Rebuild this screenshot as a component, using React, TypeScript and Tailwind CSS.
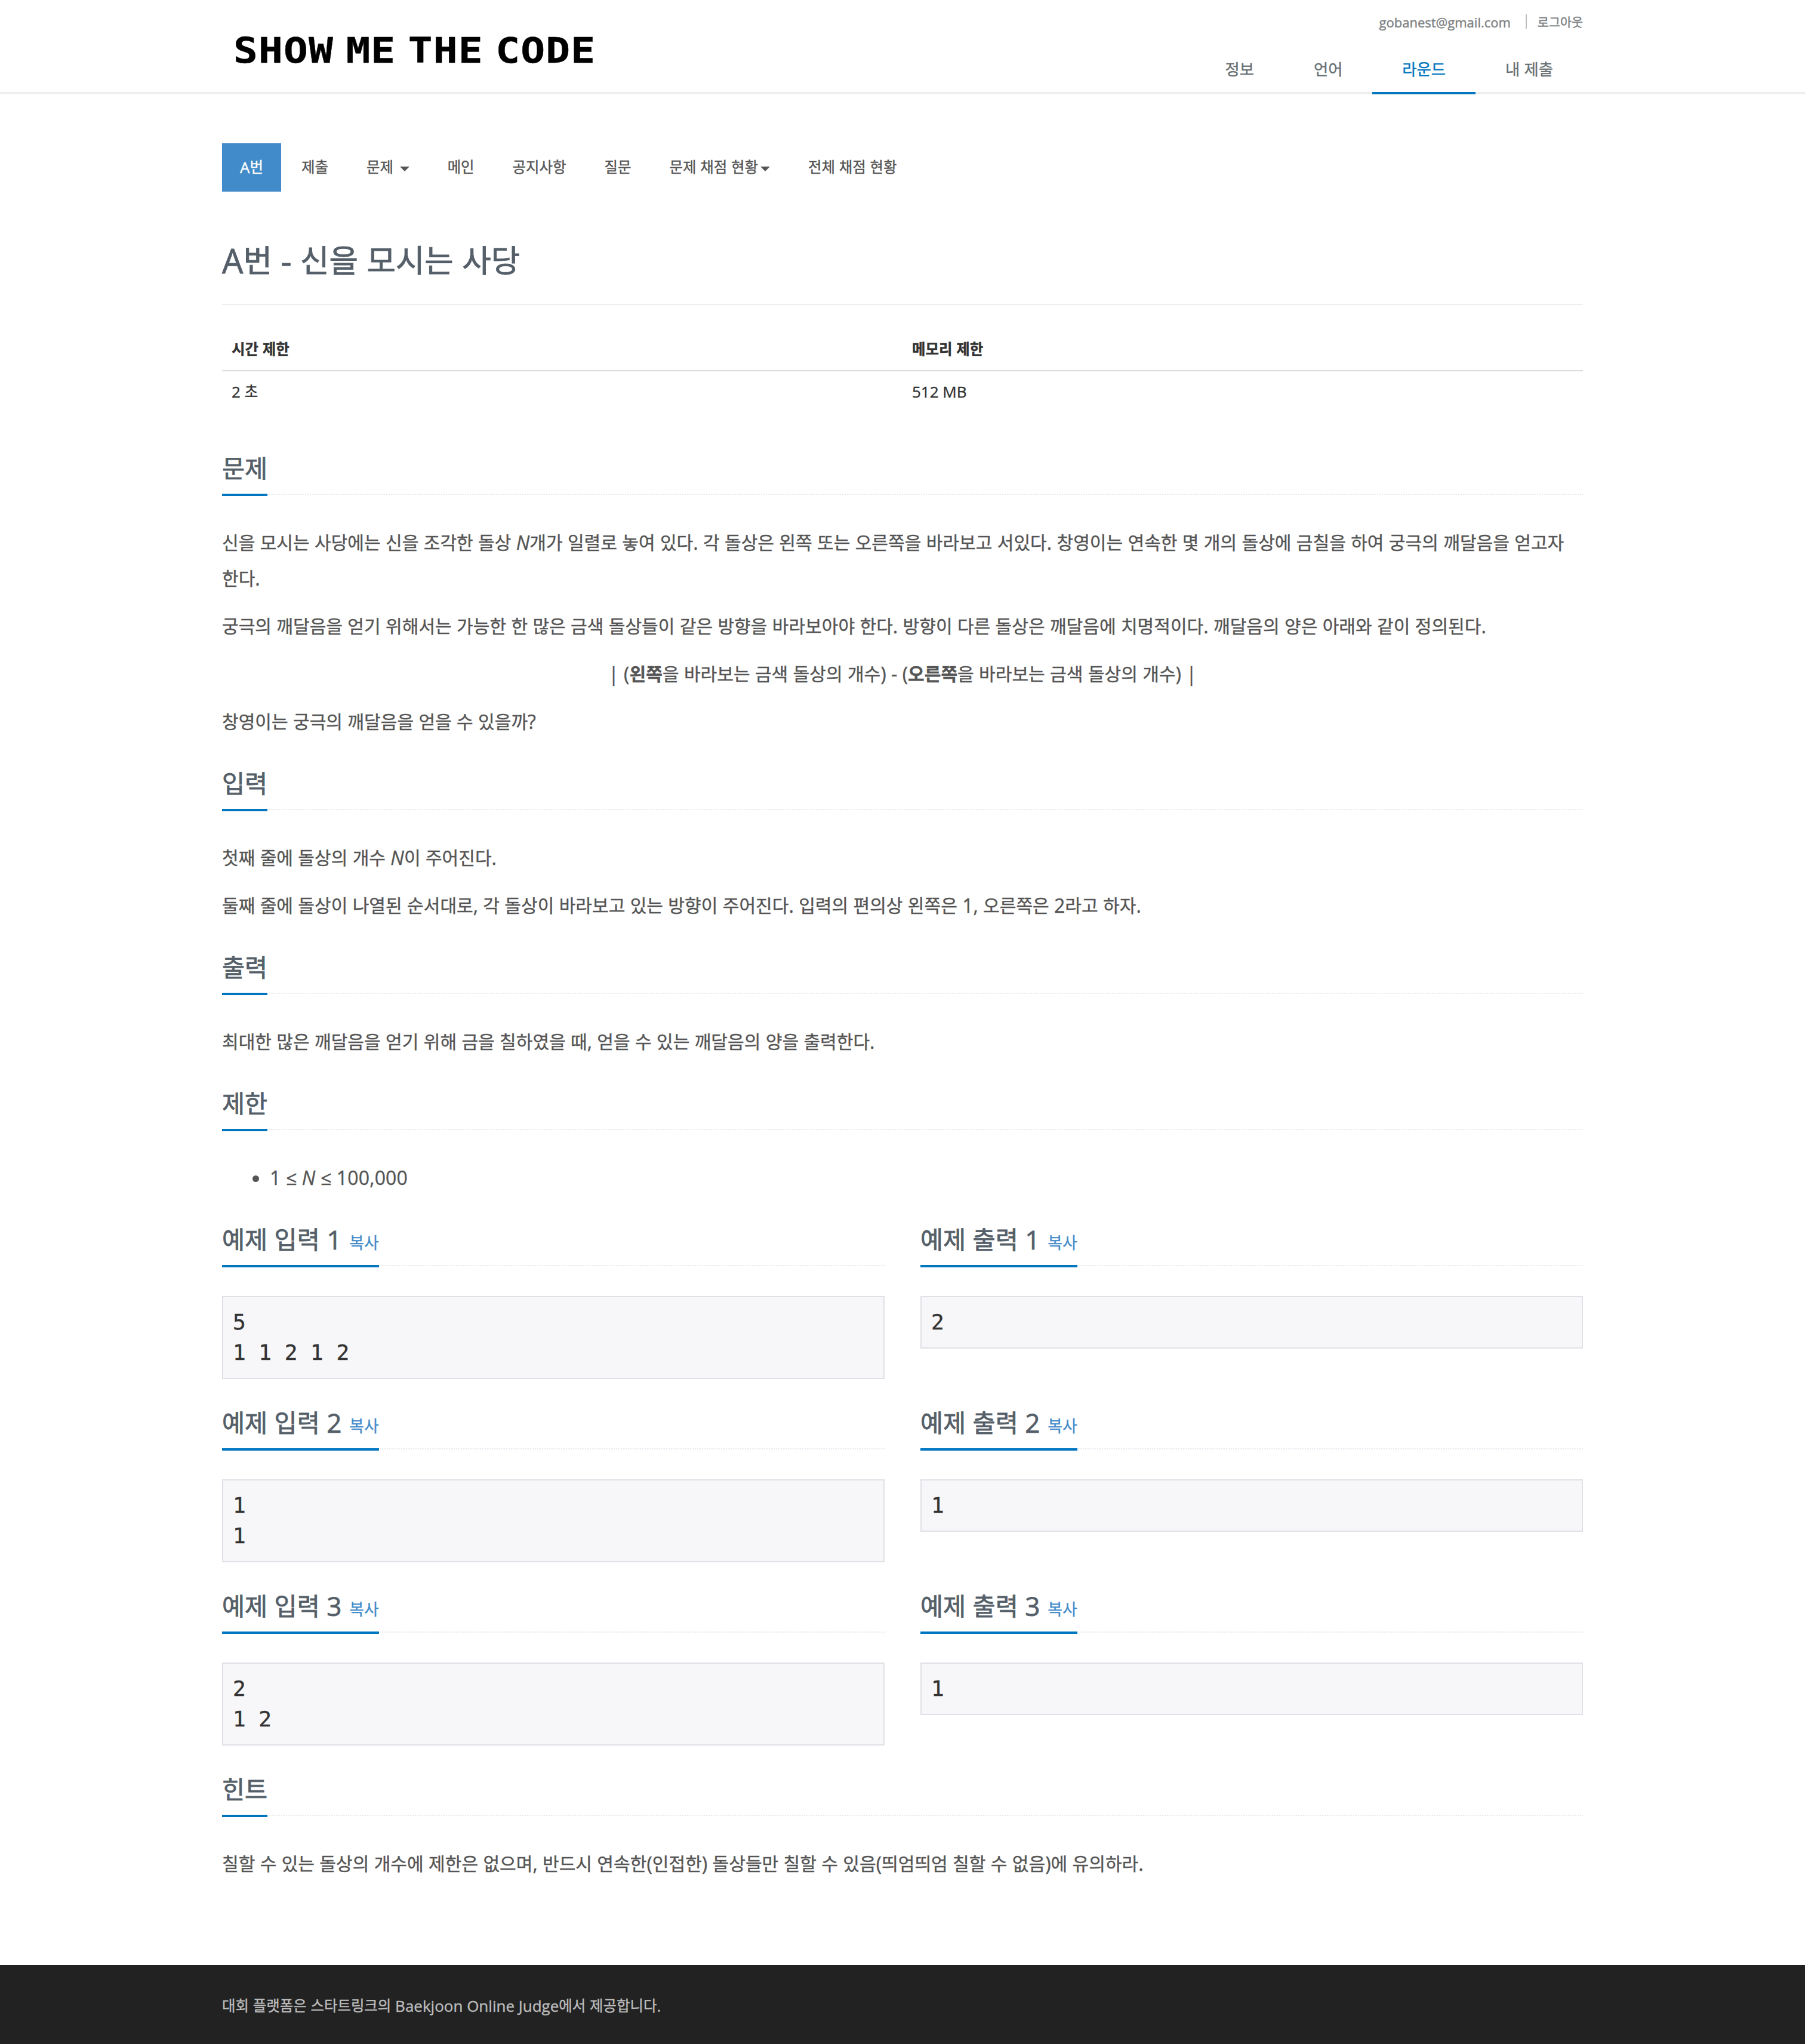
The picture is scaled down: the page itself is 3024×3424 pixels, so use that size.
import React from "react";

/* Hangul is set slightly smaller than the Latin text that surrounds it. */
function Mix({ children }: { children: string }) {
  return (
    <>
      {children.split(/([가-힣]+)/).map((part, i) =>
        i % 2 ? (
          <span key={i} className="align-[0.03em] text-[0.9405em] leading-[0]">{part}</span>
        ) : (
          part
        ),
      )}
    </>
  );
}

function Caret() {
  return (
    <span className="ml-[4px] inline-block h-0 w-0 border-x-[8px] border-t-[8px] border-x-transparent border-t-[#555] align-middle" />
  );
}

function Headline({ children, copy }: { children: string; copy?: boolean }) {
  return (
    <div className="mb-[50px] flex h-[98px] items-end border-b-2 border-dotted border-[#e4e9f0]">
      <h2 className="-mb-[4px] whitespace-pre border-b-4 border-[#0076c0] pb-[14px] text-[44px] leading-[58px] text-[#555f69] [-webkit-text-stroke:0.8px]">
        <Mix>{children}</Mix>
        {copy && (
          <a className="ml-[13px] text-[28.6px] leading-[0] text-[#428bca] [-webkit-text-stroke:0.3px]"><Mix>복사</Mix></a>
        )}
      </h2>
    </div>
  );
}

function Body({ children }: { children: React.ReactNode }) {
  return <div className="space-y-[20px] break-keep pb-[20px] text-[32px] leading-[60px] text-[#555]">{children}</div>;
}

function Sample({ title, lines }: { title: string; lines: string }) {
  return (
    <div>
      <Headline copy>{title}</Headline>
      <pre className="border-2 border-[#e0e0e7] bg-[#f7f7f9] px-[16px] pt-[16px] pb-[16.5px] font-['DejaVu_Sans_Mono',monospace] text-[36px] leading-[51.43px] text-[#333]">
        {lines}
      </pre>
    </div>
  );
}

const samples = [
  { n: 1, input: "5\n1 1 2 1 2", output: "2" },
  { n: 2, input: "1\n1", output: "1" },
  { n: 3, input: "2\n1 2", output: "1" },
];

const tabs = [
  { label: "제출" },
  { label: "문제 ", caret: true },
  { label: "메인" },
  { label: "공지사항" },
  { label: "질문" },
  { label: "문제 채점 현황", caret: true },
  { label: "전체 채점 현황" },
];

export default function App() {
  return (
    <div className="flex min-h-[3424px] flex-col bg-white font-['Open_Sans','Noto_Sans_CJK_KR',sans-serif] text-[#333] [-webkit-text-stroke:0.4px]">
      <header className="h-[158px] border-b-4 border-[#eee]">
        <div className="mx-auto flex h-[158px] w-[2280px] justify-between">
          <div className="mt-[49px] ml-[19px] origin-left scale-x-115 font-['DejaVu_Sans_Mono',monospace] text-[59px] leading-[72px] font-bold tracking-[1px] whitespace-nowrap text-black [word-spacing:-18.8px]">
            SHOW ME THE CODE
          </div>
          <div className="flex flex-col items-end justify-between">
            <div className="mt-[21px] flex items-center text-[22px] leading-[32px] text-[#7c8082]">
              <span>gobanest@gmail.com</span>
              <span className="mr-[18px] mb-[2px] ml-[25px] h-[24px] w-[2px] bg-[#bbb]" />
              <span><Mix>로그아웃</Mix></span>
            </div>
            <nav className="flex text-[28px] leading-[40px] text-[#687074]">
              <a className="px-[50px] pb-[22px]"><Mix>정보</Mix></a>
              <a className="px-[50px] pb-[22px]"><Mix>언어</Mix></a>
              <a className="border-b-4 border-[#0076c0] px-[50px] pb-[18px] text-[#0076c0]"><Mix>라운드</Mix></a>
              <a className="px-[50px] pb-[22px]"><Mix>내 제출</Mix></a>
            </nav>
          </div>
        </div>
      </header>

      <main className="mx-auto w-[2280px] pt-[82px]">
        <nav className="flex gap-[4px] text-[26px] leading-[41px] text-[#555]">
          <a className="bg-[#428bca] px-[30px] py-[20px] text-white"><Mix>A번</Mix></a>
          {tabs.map((t) => (
            <a key={t.label} className="px-[30px] py-[20px]">
              <Mix>{t.label}</Mix>
              {t.caret && <Caret />}
            </a>
          ))}
        </nav>

        <h1 className="mt-[79px] h-[111px] border-b-2 border-[#eee] text-[56px] leading-[72px] text-[#555f69] [-webkit-text-stroke:0.9px]">
          <Mix>A번 - 신을 모시는 사당</Mix>
        </h1>

        <div className="mt-[40px] grid grid-cols-2 text-[26px] leading-[37px]">
          <div className="border-b-2 border-[#ddd] p-[16px] font-bold"><Mix>시간 제한</Mix></div>
          <div className="border-b-2 border-[#ddd] p-[16px] font-bold"><Mix>메모리 제한</Mix></div>
          <div className="p-[16px]"><Mix>2 초</Mix></div>
          <div className="p-[16px]">512 MB</div>
        </div>

        <div className="mt-[40px]">
          <Headline>문제</Headline>
          <Body>
            <p>
              <Mix>신을 모시는 사당에는 신을 조각한 돌상 </Mix><em>N</em>
              <Mix>개가 일렬로 놓여 있다. 각 돌상은 왼쪽 또는 오른쪽을 바라보고 서있다. 창영이는 연속한 몇 개의 돌상에 금칠을 하여 궁극의 깨달음을 얻고자 한다.</Mix>
            </p>
            <p><Mix>궁극의 깨달음을 얻기 위해서는 가능한 한 많은 금색 돌상들이 같은 방향을 바라보아야 한다. 방향이 다른 돌상은 깨달음에 치명적이다. 깨달음의 양은 아래와 같이 정의된다.</Mix></p>
            <p className="text-center">
              | (<b><Mix>왼쪽</Mix></b><Mix>을 바라보는 금색 돌상의 개수) - (</Mix><b><Mix>오른쪽</Mix></b><Mix>을 바라보는 금색 돌상의 개수) |</Mix>
            </p>
            <p><Mix>창영이는 궁극의 깨달음을 얻을 수 있을까?</Mix></p>
          </Body>
          <Headline>입력</Headline>
          <Body>
            <p><Mix>첫째 줄에 돌상의 개수 </Mix><em>N</em><Mix>이 주어진다.</Mix></p>
            <p><Mix>둘째 줄에 돌상이 나열된 순서대로, 각 돌상이 바라보고 있는 방향이 주어진다. 입력의 편의상 왼쪽은 1, 오른쪽은 2라고 하자.</Mix></p>
          </Body>
          <Headline>출력</Headline>
          <Body>
            <p><Mix>최대한 많은 깨달음을 얻기 위해 금을 칠하였을 때, 얻을 수 있는 깨달음의 양을 출력한다.</Mix></p>
          </Body>
          <Headline>제한</Headline>
          <Body>
            <ul className="list-disc pl-[80px]">
              <li className="tracking-[0.15px]">1 ≤ <em>N</em> ≤ 100,000</li>
            </ul>
          </Body>
          {samples.map((s) => (
            <div key={s.n} className="grid grid-cols-2 gap-[60px] pb-[19.5px]">
              <Sample title={"예제 입력 " + s.n} lines={s.input} />
              <Sample title={"예제 출력 " + s.n} lines={s.output} />
            </div>
          ))}
          <Headline>힌트</Headline>
          <Body>
            <p><Mix>칠할 수 있는 돌상의 개수에 제한은 없으며, 반드시 연속한(인접한) 돌상들만 칠할 수 있음(띄엄띄엄 칠할 수 없음)에 유의하라.</Mix></p>
          </Body>
        </div>
      </main>

      <footer className="mt-[120px] grow bg-[#222]">
        <div className="mx-auto w-[2280px] pt-[48px] text-[26px] leading-[40px] text-[#bbb]">
          <Mix>대회 플랫폼은 스타트링크의 Baekjoon Online Judge에서 제공합니다.</Mix>
        </div>
      </footer>
    </div>
  );
}
